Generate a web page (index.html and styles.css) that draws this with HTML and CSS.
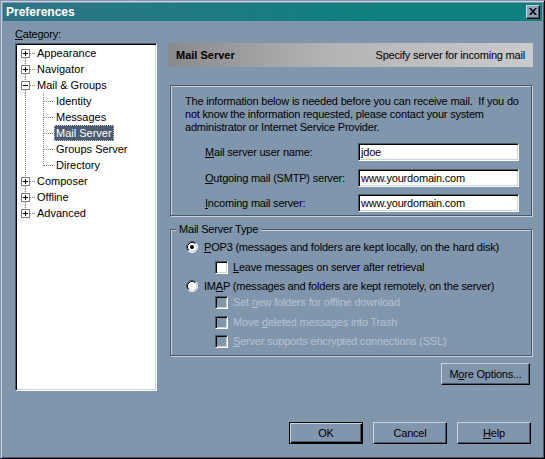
FILE: index.html
```html
<!DOCTYPE html>
<html>
<head>
<meta charset="utf-8">
<title>Preferences</title>
<link rel="stylesheet" href="styles.css">
</head>
<body>
<div class="window">
  <div class="titlebar">
    <span class="title">Preferences</span>
    <div class="close">
      <svg width="8" height="7" viewBox="0 0 8 7"><path d="M0 0h2l2 2.5L6 0h2L5 3.5 8 7H6L4 4.5 2 7H0l3-3.5z" fill="#000"/></svg>
    </div>
  </div>
  <div class="main">
    <div class="left">
      <div class="cat-label"><u>C</u>ategory:</div>
      <div class="tree">
        <div class="row">
          <svg class="gut" width="20" height="16"><line x1="8.5" y1="13" x2="8.5" y2="16" class="dot"/><line x1="13" y1="8.5" x2="19" y2="8.5" class="dot"/><rect x="4.5" y="4.5" width="8" height="8" class="box"/><path d="M6 8.5h5M8.5 6v5" class="sign"/></svg>
          <span class="lbl">Appearance</span>
        </div>
        <div class="row">
          <svg class="gut" width="20" height="16"><line x1="8.5" y1="0" x2="8.5" y2="4" class="dot"/><line x1="8.5" y1="13" x2="8.5" y2="16" class="dot"/><line x1="13" y1="8.5" x2="19" y2="8.5" class="dot"/><rect x="4.5" y="4.5" width="8" height="8" class="box"/><path d="M6 8.5h5M8.5 6v5" class="sign"/></svg>
          <span class="lbl">Navigator</span>
        </div>
        <div class="row">
          <svg class="gut" width="20" height="16"><line x1="8.5" y1="0" x2="8.5" y2="4" class="dot"/><line x1="8.5" y1="13" x2="8.5" y2="16" class="dot"/><line x1="13" y1="8.5" x2="19" y2="8.5" class="dot"/><rect x="4.5" y="4.5" width="8" height="8" class="box"/><path d="M6 8.5h5" class="sign"/></svg>
          <span class="lbl">Mail &amp; Groups</span>
        </div>
        <div class="row">
          <svg class="gut child" width="37" height="16"><line x1="8.5" y1="0" x2="8.5" y2="16" class="dot"/><line x1="26.5" y1="0" x2="26.5" y2="16" class="dot"/><line x1="27" y1="8.5" x2="36" y2="8.5" class="dot"/></svg>
          <span class="lbl">Identity</span>
        </div>
        <div class="row">
          <svg class="gut child" width="37" height="16"><line x1="8.5" y1="0" x2="8.5" y2="16" class="dot"/><line x1="26.5" y1="0" x2="26.5" y2="16" class="dot"/><line x1="27" y1="8.5" x2="36" y2="8.5" class="dot"/></svg>
          <span class="lbl">Messages</span>
        </div>
        <div class="row">
          <svg class="gut child" width="37" height="16"><line x1="8.5" y1="0" x2="8.5" y2="16" class="dot"/><line x1="26.5" y1="0" x2="26.5" y2="16" class="dot"/><line x1="27" y1="8.5" x2="36" y2="8.5" class="dot"/></svg>
          <span class="lbl selected">Mail Server</span>
        </div>
        <div class="row">
          <svg class="gut child" width="37" height="16"><line x1="8.5" y1="0" x2="8.5" y2="16" class="dot"/><line x1="26.5" y1="0" x2="26.5" y2="16" class="dot"/><line x1="27" y1="8.5" x2="36" y2="8.5" class="dot"/></svg>
          <span class="lbl">Groups Server</span>
        </div>
        <div class="row">
          <svg class="gut child" width="37" height="16"><line x1="8.5" y1="0" x2="8.5" y2="16" class="dot"/><line x1="26.5" y1="0" x2="26.5" y2="9" class="dot"/><line x1="27" y1="8.5" x2="36" y2="8.5" class="dot"/></svg>
          <span class="lbl">Directory</span>
        </div>
        <div class="row">
          <svg class="gut" width="20" height="16"><line x1="8.5" y1="0" x2="8.5" y2="4" class="dot"/><line x1="8.5" y1="13" x2="8.5" y2="16" class="dot"/><line x1="13" y1="8.5" x2="19" y2="8.5" class="dot"/><rect x="4.5" y="4.5" width="8" height="8" class="box"/><path d="M6 8.5h5M8.5 6v5" class="sign"/></svg>
          <span class="lbl">Composer</span>
        </div>
        <div class="row">
          <svg class="gut" width="20" height="16"><line x1="8.5" y1="0" x2="8.5" y2="4" class="dot"/><line x1="8.5" y1="13" x2="8.5" y2="16" class="dot"/><line x1="13" y1="8.5" x2="19" y2="8.5" class="dot"/><rect x="4.5" y="4.5" width="8" height="8" class="box"/><path d="M6 8.5h5M8.5 6v5" class="sign"/></svg>
          <span class="lbl">Offline</span>
        </div>
        <div class="row">
          <svg class="gut" width="20" height="16"><line x1="8.5" y1="0" x2="8.5" y2="4" class="dot"/><line x1="13" y1="8.5" x2="19" y2="8.5" class="dot"/><rect x="4.5" y="4.5" width="8" height="8" class="box"/><path d="M6 8.5h5M8.5 6v5" class="sign"/></svg>
          <span class="lbl">Advanced</span>
        </div>
      </div>
    </div>
    <div class="right">
      <div class="banner">
        <span class="banner-title">Mail Server</span>
        <span class="banner-desc">Specify server for incoming mail</span>
      </div>
      <div class="group info">
        <p class="intro">The information below is needed before you can receive mail.&nbsp; If you do<br>not know the information requested, please contact your system<br>administrator or Internet Service Provider.</p>
        <div class="form">
          <div class="frow"><span class="flabel"><u>M</u>ail server user name:</span><div class="input">jdoe</div></div>
          <div class="frow"><span class="flabel"><u>O</u>utgoing mail (SMTP) server:</span><div class="input">www.yourdomain.com</div></div>
          <div class="frow"><span class="flabel"><u>I</u>ncoming mail server:</span><div class="input">www.yourdomain.com</div></div>
        </div>
      </div>
      <div class="group type">
        <div class="legend">Mail Server Type</div>
        <div class="opt r-pop">
          <svg class="radio" width="12" height="12" viewBox="0 0 12 12"><circle cx="6" cy="6" r="5" fill="#fff"/><path d="M2.11 9.89A5.5 5.5 0 0 1 9.89 2.11" class="r-o1"/><path d="M9.89 2.11A5.5 5.5 0 0 1 2.11 9.89" class="r-o2"/><path d="M2.82 9.18A4.5 4.5 0 0 1 9.18 2.82" class="r-i1"/><path d="M9.18 2.82A4.5 4.5 0 0 1 2.82 9.18" class="r-i2"/><circle cx="6" cy="6" r="2" fill="#000"/></svg>
          <span><u>P</u>OP3 (messages and folders are kept locally, on the hard disk)</span>
        </div>
        <div class="opt sub r-leave">
          <span class="check"></span>
          <span><u>L</u>eave messages on server after retrieval</span>
        </div>
        <div class="opt r-imap">
          <svg class="radio" width="12" height="12" viewBox="0 0 12 12"><circle cx="6" cy="6" r="5" fill="#fff"/><path d="M2.11 9.89A5.5 5.5 0 0 1 9.89 2.11" class="r-o1"/><path d="M9.89 2.11A5.5 5.5 0 0 1 2.11 9.89" class="r-o2"/><path d="M2.82 9.18A4.5 4.5 0 0 1 9.18 2.82" class="r-i1"/><path d="M9.18 2.82A4.5 4.5 0 0 1 2.82 9.18" class="r-i2"/></svg>
          <span>IM<u>A</u>P (messages and folders are kept remotely, on the server)</span>
        </div>
        <div class="opt sub disabled r-d1">
          <span class="check off"></span>
          <span>Set <u>n</u>ew folders for offline download</span>
        </div>
        <div class="opt sub disabled r-d2">
          <span class="check off"></span>
          <span>Move <u>d</u>eleted messages into Trash</span>
        </div>
        <div class="opt sub disabled r-d3">
          <span class="check off"></span>
          <span><u>S</u>erver supports encrypted connections (SSL)</span>
        </div>
      </div>
      <div class="more-row">
        <div class="btn more">M<u>o</u>re Options...</div>
      </div>
    </div>
  </div>
  <div class="footer">
    <div class="btn default">OK</div>
    <div class="btn">Cancel</div>
    <div class="btn"><u>H</u>elp</div>
  </div>
</div>
</body>
</html>
```
FILE: styles.css
```css
* { box-sizing: border-box; }
html, body { margin: 0; padding: 0; background: #8096ad; }
body {
  font-family: "Liberation Sans", Arial, sans-serif;
  font-size: 11px;
  letter-spacing: -0.2px;
  color: #000;
}
u { text-decoration: underline; text-underline-offset: 1px; }

.window {
  width: 545px;
  height: 459px;
  background: #8096ad;
  border: 1px solid;
  border-color: #8096ad #000 #000 #8096ad;
  box-shadow: inset 1px 1px 0 #c8d3df, inset -1px -1px 0 #4a5868;
  padding: 1px;
  display: flex;
  flex-direction: column;
}

.titlebar {
  margin: 1px 1px 0 1px;
  height: 18px;
  background: linear-gradient(to right, #2f7488, #0f8080 70%, #0f8080);
  display: flex;
  align-items: center;
  justify-content: space-between;
  padding: 0 2px 0 3px;
}
.title {
  color: #fff;
  font-weight: bold;
  font-size: 12px;
  letter-spacing: 0;
}
.close {
  width: 14px;
  height: 14px;
  margin-top: -1px;
  background: #8ea1b6;
  border: 1px solid;
  border-color: #c8d3df #000 #000 #c8d3df;
  box-shadow: inset -1px -1px 0 #4a5868;
  display: flex;
  align-items: center;
  justify-content: center;
  padding: 0 1px 1px 0;
}
.close svg { display: block; }

.main {
  display: flex;
  padding: 6px 10px 0 13px;
  gap: 11px;
}
.left { width: 142px; flex: none; }
.cat-label { height: 14px; line-height: 14px; margin-bottom: 2px; }
.tree {
  height: 348px;
  background: #fff;
  border: 1px solid;
  border-color: #4a5868 #fff #fff #4a5868;
  box-shadow: inset 1px 1px 0 #000, inset -1px -1px 0 #c8d3df;
  padding: 1px;
}
.row {
  height: 16px;
  display: flex;
  align-items: center;
}
.gut { display: block; flex: none; }
.dot { stroke: #808080; stroke-width: 1; stroke-dasharray: 1 1; }
.box { fill: #fff; stroke: #808080; stroke-width: 1; }
.sign { stroke: #000; stroke-width: 1; fill: none; }
.lbl { line-height: 16px; height: 16px; white-space: nowrap; letter-spacing: 0; }
.child + .lbl { padding: 0 2px; }
.lbl.selected {
  background: #4d5c70;
  color: #fff;
  outline: 1px dotted #b8c4d2;
  outline-offset: -1px;
}

.right { flex: 1; padding-top: 16px; }
.banner {
  height: 24px;
  background: linear-gradient(to right, #8a8a8c, #b4b4b6 45%, #cacaca);
  display: flex;
  align-items: center;
  justify-content: space-between;
  padding: 0 8px;
}
.banner-title { font-weight: bold; font-size: 11px; letter-spacing: 0; }

.group {
  margin-left: 2px;
  margin-right: 1px;
  border: 1px solid #4a5868;
  box-shadow: inset 1px 1px 0 #c8d3df, 1px 1px 0 #c8d3df;
}
.info {
  margin-top: 18px;
  padding: 9px 0 3px 14px;
}
.intro {
  margin: 0;
  line-height: 13px;
  white-space: nowrap;
}
.form {
  margin-top: 9px;
  padding-left: 20px;
  display: flex;
  flex-direction: column;
  gap: 7.5px;
}
.frow { display: flex; align-items: center; height: 18px; }
.flabel { width: 153px; flex: none; }
.input {
  width: 161px;
  height: 18px;
  background: #fff;
  border: 1px solid;
  border-color: #4a5868 #fff #fff #4a5868;
  box-shadow: inset 1px 1px 0 #000, inset -1px -1px 0 #c8d3df;
  padding: 0 2px;
  line-height: 16px;
}

.type {
  margin-top: 13px;
  padding: 0 0 6px 14px;
}
.legend {
  margin: -8px 0 0 -9px;
  padding: 0 3px;
  width: fit-content;
  height: 14px;
  line-height: 14px;
  background: #8096ad;
}
.opt {
  height: 16px;
  display: flex;
  align-items: center;
  white-space: nowrap;
}
.opt.sub { padding-left: 30px; }
.r-pop { margin-top: 3px; }
.r-leave { margin-top: 4px; }
.r-imap { margin-top: 3px; }
.r-d1 { margin-top: 0; }
.r-d2 { margin-top: 4px; }
.r-d3 { margin-top: 3px; }
.radio { display: block; flex: none; margin-right: 6px; margin-left: 1px; }
.r-o1 { stroke: #4a5868; fill: none; }
.r-o2 { stroke: #fff; fill: none; }
.r-i1 { stroke: #000; fill: none; }
.r-i2 { stroke: #c8d3df; fill: none; }
.check {
  width: 13px;
  height: 13px;
  flex: none;
  margin-right: 5px;
  background: #fff;
  border: 1px solid;
  border-color: #4a5868 #fff #fff #4a5868;
  box-shadow: inset 1px 1px 0 #000, inset -1px -1px 0 #c8d3df;
}
.check.off { background: #8096ad; }
.disabled { color: #b6c1ce; }

.more-row {
  margin-top: 7px;
  display: flex;
  justify-content: flex-end;
  padding-right: 3px;
}
.btn {
  height: 22px;
  background: #8096ad;
  border: 1px solid;
  border-color: #c8d3df #000 #000 #c8d3df;
  box-shadow: inset -1px -1px 0 #4a5868;
  display: flex;
  align-items: center;
  justify-content: center;
  padding-bottom: 1px;
  white-space: nowrap;
}
.more { width: 89px; }
.footer {
  margin-top: 31px;
  display: flex;
  justify-content: flex-end;
  gap: 10px;
  padding-right: 12px;
}
.footer .btn { width: 74px; }
.btn.default {
  border: 1px solid #000;
  box-shadow: inset 1px 1px 0 #c8d3df, inset -1px -1px 0 #000, inset -2px -2px 0 #4a5868;
}
```
